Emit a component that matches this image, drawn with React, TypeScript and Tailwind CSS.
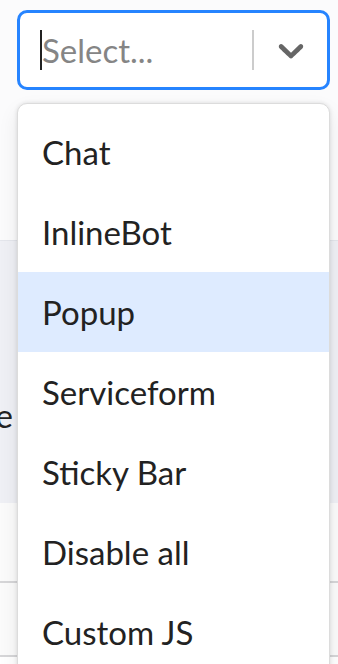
const options = [
  "Chat",
  "InlineBot",
  "Popup",
  "Serviceform",
  "Sticky Bar",
  "Disable all",
  "Custom JS",
];

function Chevron() {
  return (
    <svg viewBox="0 0 20 20" className="h-[42px] w-[42px] fill-[#666666]">
      <path d="M4.516 7.548c0.436-0.446 1.043-0.481 1.576 0l3.908 3.747 3.908-3.747c0.533-0.481 1.141-0.446 1.574 0 0.436 0.445 0.408 1.197 0 1.615-0.406 0.418-4.695 4.502-4.695 4.502-0.217 0.223-0.502 0.335-0.787 0.335s-0.57-0.112-0.789-0.335c0 0-4.287-4.084-4.695-4.502s-0.436-1.17 0-1.615z" />
    </svg>
  );
}

export default function App() {
  const active = "Popup";

  return (
    <div className="relative h-[664px] w-full overflow-hidden bg-white font-['Lato',sans-serif] text-[#222]">
      {/* page behind the open menu */}
      <div className="flex flex-col">
        <div className="h-[240px] bg-[#fbfbfc]" />
        <div className="flex h-[263px] items-center border-t border-[#e4e6ec] bg-[#eff0f5]">
          <div className="mt-[88px] flex w-[13px] justify-end overflow-hidden text-[33px]">
            <span className="whitespace-nowrap">Schedule</span>
          </div>
        </div>
        <div className="h-[80px] border-b-2 border-[#d6d6d8] bg-[#fbfbfb]" />
        <div className="h-[74px] border-b-2 border-[#d6d6d8] bg-[#fbfbfb]" />
      </div>

      {/* select control */}
      <div className="absolute left-[17px] top-[10px] flex h-[80px] w-[313px] items-center rounded-[10px] border-[3px] border-[#2684ff] bg-white">
        <div className="flex flex-1 items-center pl-[20px]">
          <span className="h-[40px] w-[2px] bg-[#222]" />
          <span className="text-[33px] leading-[40px] text-[#858585]">Select...</span>
        </div>
        <span className="h-[40px] w-[2px] bg-[#cccccc]" />
        <div className="flex w-[73px] items-center justify-center">
          <Chevron />
        </div>
      </div>

      {/* menu */}
      <div className="absolute left-[17px] top-[103px] w-[313px] rounded-[10px] border border-[#dcdcdc] bg-white py-[8px] shadow-[0_0_4px_rgba(0,0,0,0.12),0_8px_20px_rgba(0,0,0,0.08)]">
        {options.map((o) => (
          <div
            key={o}
            className={
              "flex h-[80px] items-center px-[24px] text-[33px] leading-[40px] " +
              (o === active ? "bg-[#deebff]" : "bg-white")
            }
          >
            {o}
          </div>
        ))}
      </div>
    </div>
  );
}
